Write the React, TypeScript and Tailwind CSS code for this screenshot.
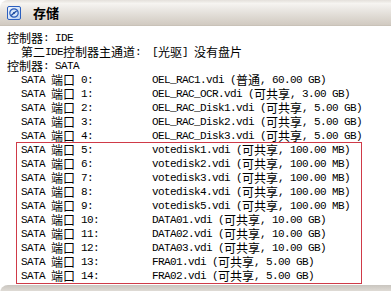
import React from "react";

const CJK = /[\u3000-\u9fff\uff00-\uffef]/;

function Txt({ s }: { s: string }) {
  const parts: { cjk: boolean; t: string }[] = [];
  for (const ch of s) {
    const c = CJK.test(ch);
    const last = parts[parts.length - 1];
    if (last && last.cjk === c) last.t += ch;
    else parts.push({ cjk: c, t: ch });
  }
  return (
    <>
      {parts.map((p, i) =>
        p.cjk ? (
          <span
            key={i}
            className="inline-block align-top h-[14px] text-[12px] leading-[14px] tracking-normal"
            style={{ fontFamily: '"Noto Sans CJK SC", sans-serif' }}
          >
            {p.t}
          </span>
        ) : (
          <span
            key={i}
            className="inline-block align-top h-[14px] text-[11px] leading-[15px] tracking-[-0.6px]"
            style={{ fontFamily: '"Liberation Mono", monospace' }}
          >
            {p.t}
          </span>
        )
      )}
    </>
  );
}

function Line({ s }: { s: string }) {
  return (
    <div className="h-[14px] leading-[14px] whitespace-pre text-black">
      <Txt s={s} />
    </div>
  );
}

function Row({ a, b }: { a: string; b: string }) {
  return (
    <div className="grid grid-cols-[131px_1fr] h-[14px] leading-[14px] whitespace-pre text-black">
      <div className="h-[14px]">
        <Txt s={a} />
      </div>
      <div className="h-[14px]">
        <Txt s={b} />
      </div>
    </div>
  );
}

const top = [
  ["SATA 端口 0:", "OEL_RAC1.vdi (普通, 60.00 GB)"],
  ["SATA 端口 1:", "OEL_RAC_OCR.vdi (可共享, 3.00 GB)"],
  ["SATA 端口 2:", "OEL_RAC_Disk1.vdi (可共享, 5.00 GB)"],
  ["SATA 端口 3:", "OEL_RAC_Disk2.vdi (可共享, 5.00 GB)"],
  ["SATA 端口 4:", "OEL_RAC_Disk3.vdi (可共享, 5.00 GB)"],
];

const boxed = [
  ["SATA 端口 5:", "votedisk1.vdi (可共享, 100.00 MB)"],
  ["SATA 端口 6:", "votedisk2.vdi (可共享, 100.00 MB)"],
  ["SATA 端口 7:", "votedisk3.vdi (可共享, 100.00 MB)"],
  ["SATA 端口 8:", "votedisk4.vdi (可共享, 100.00 MB)"],
  ["SATA 端口 9:", "votedisk5.vdi (可共享, 100.00 MB)"],
  ["SATA 端口 10:", "DATA01.vdi (可共享, 10.00 GB)"],
  ["SATA 端口 11:", "DATA02.vdi (可共享, 10.00 GB)"],
  ["SATA 端口 12:", "DATA03.vdi (可共享, 10.00 GB)"],
  ["SATA 端口 13:", "FRA01.vdi (可共享, 5.00 GB)"],
  ["SATA 端口 14:", "FRA02.vdi (可共享, 5.00 GB)"],
];

function DiskIcon() {
  return (
    <svg width="16" height="16" viewBox="0 0 16 16">
      <defs>
        <linearGradient id="ig" x1="0" y1="0" x2="1" y2="1">
          <stop offset="0" stopColor="#f4f8ff" />
          <stop offset="1" stopColor="#b9d0f0" />
        </linearGradient>
      </defs>
      <rect x="1.5" y="1.5" width="13" height="13" rx="1.5" fill="url(#ig)" stroke="#2b5fbf" />
      <circle cx="8" cy="8" r="4.2" fill="#d6e5f8" stroke="#2a5bb8" strokeWidth="1.2" />
      <path d="M5.2 10.5 L8 8 L10.6 6" stroke="#1d4aa0" strokeWidth="1.3" fill="none" />
      <circle cx="8" cy="8" r="1" fill="#1d4aa0" />
    </svg>
  );
}

export default function App() {
  return (
    <div className="w-[391px] h-[291px] bg-white overflow-hidden flex flex-col">
      <div
        className="h-[26px] shrink-0 rounded-tl-[8px] flex items-center pl-[6px] border-b border-[#c9c2b8]"
        style={{
          background:
            "linear-gradient(to bottom, #e4e0db 0%, #f6f4f1 14%, #ece9e5 35%, #ddd8d1 70%, #d1cac1 100%)",
        }}
      >
        <DiskIcon />
        <span
          className="ml-[11px] text-[13px] font-bold text-black leading-[14px]"
          style={{ fontFamily: '"Noto Sans CJK SC", sans-serif' }}
        >
          存储
        </span>
      </div>
      <div className="pt-[5px] pl-[7px] shrink-0">
        <Line s="控制器: IDE" />
        <div className="pl-[14px]">
          <Row a="第二IDE控制器主通道:" b="[光驱] 没有盘片" />
        </div>
        <Line s="控制器: SATA" />
        <div className="pl-[14px]">
          {top.map(([a, b]) => (
            <Row key={a} a={a} b={b} />
          ))}
        </div>
        <div className="ml-[9px] w-[346px] border border-[#cf3a48] -my-px pl-[4px]">
          {boxed.map(([a, b]) => (
            <Row key={a} a={a} b={b} />
          ))}
        </div>
      </div>
      <div className="h-[2px] shrink-0" />
      <div
        className="h-[26px] shrink-0 rounded-tl-[8px]"
        style={{
          background:
            "linear-gradient(to bottom, #c9c5bf 0%, #dcd8d2 20%, #ece9e5 40%, #ddd8d1 70%, #d1cac1 100%)",
        }}
      />
    </div>
  );
}
